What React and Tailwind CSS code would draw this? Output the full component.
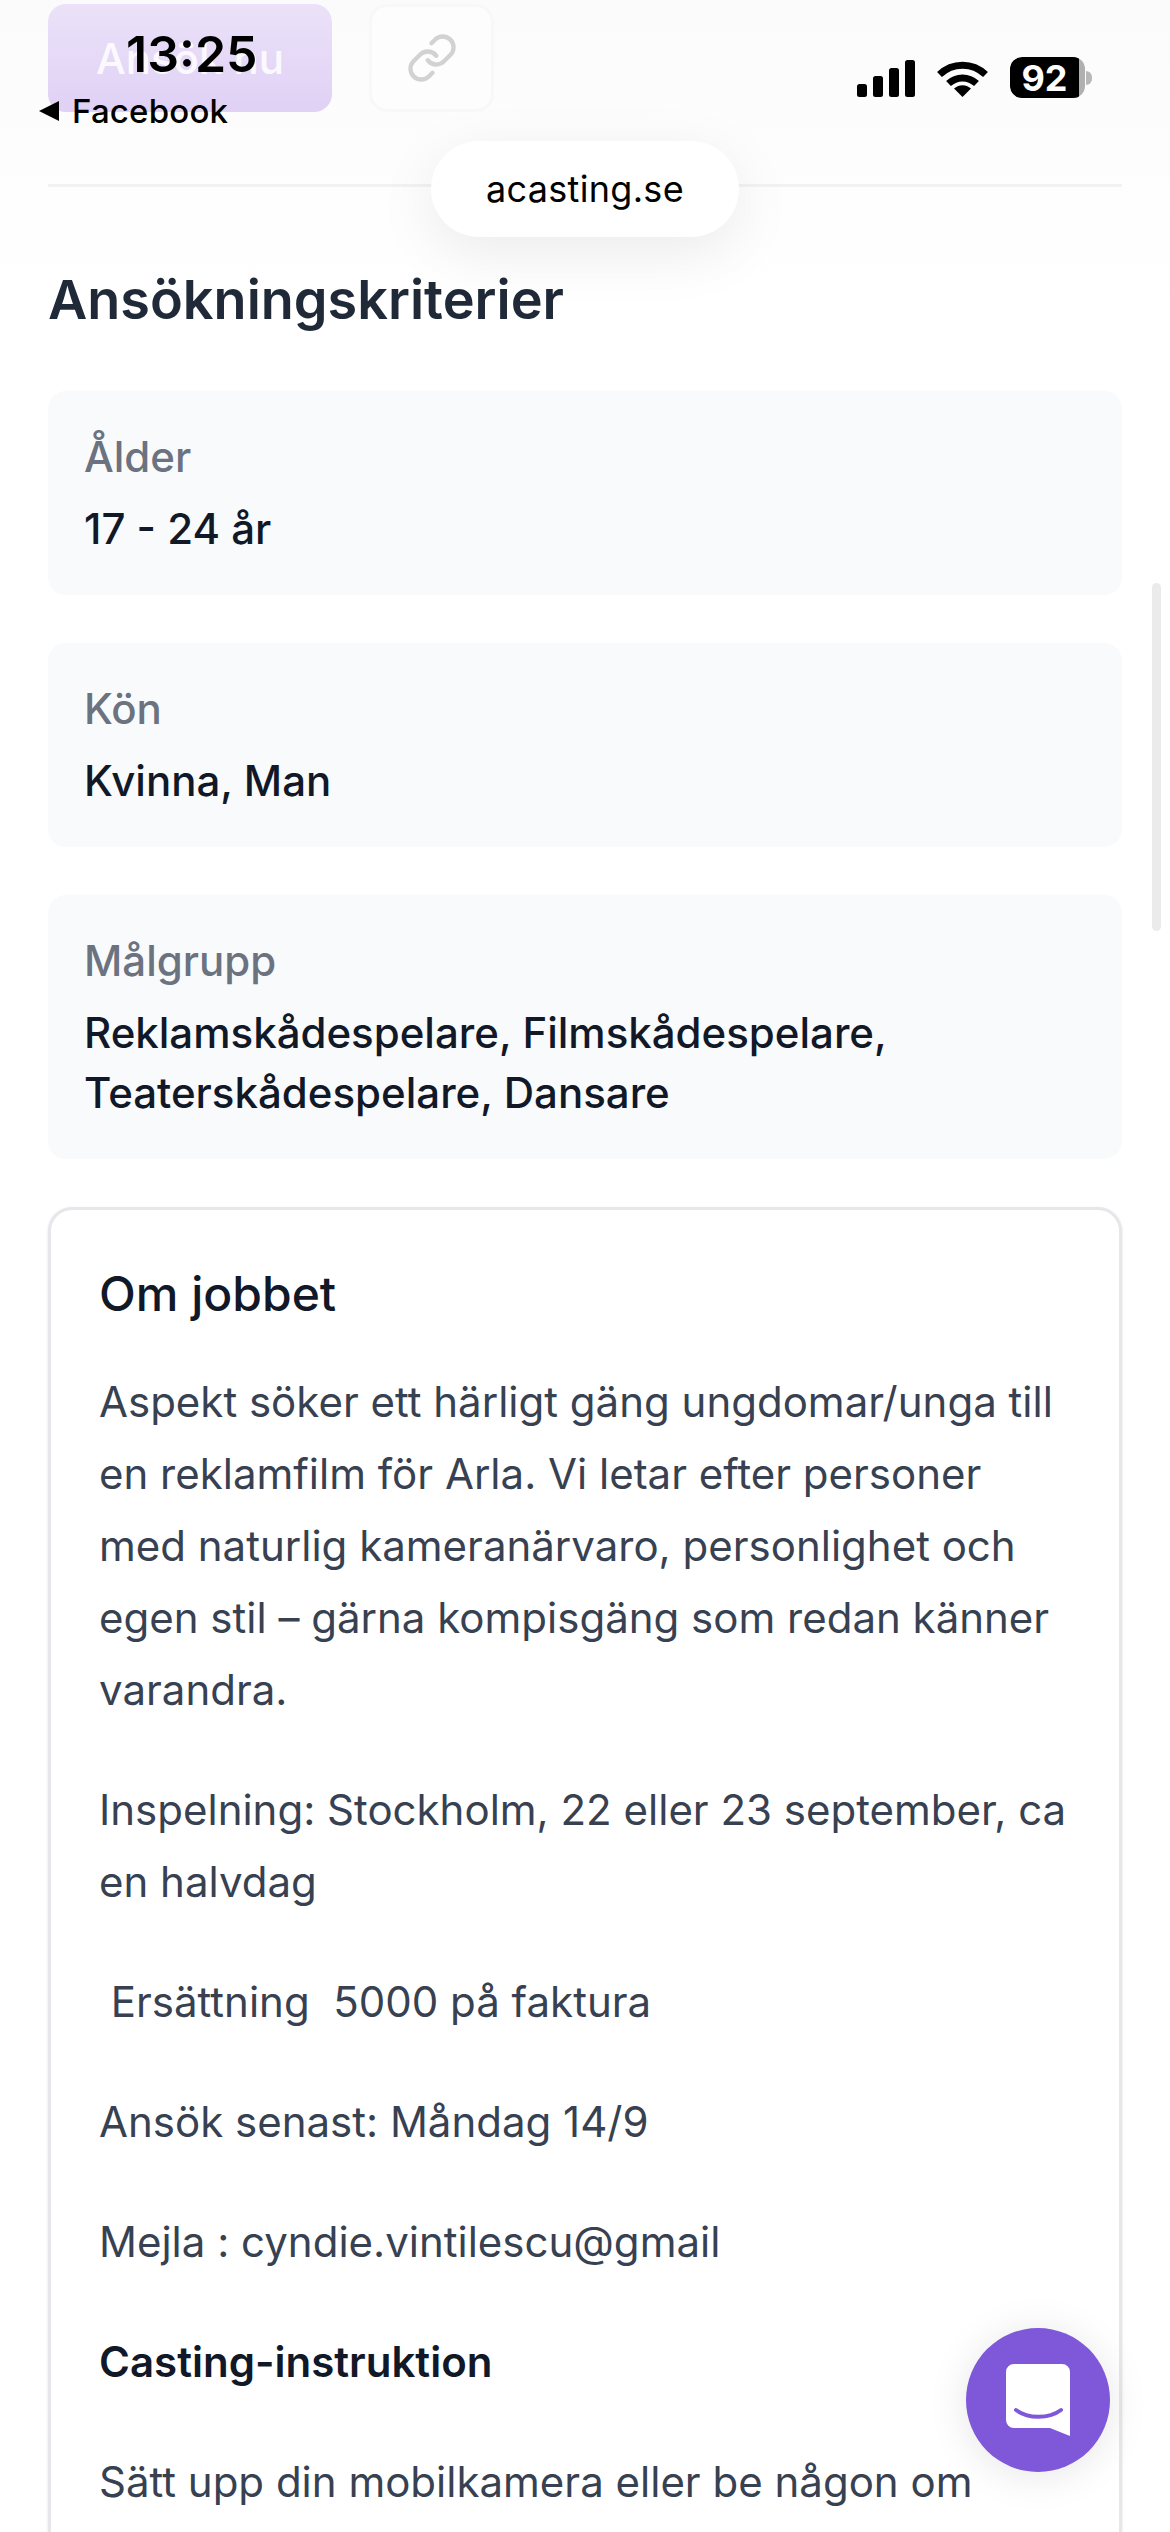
import React from 'react';
import { Link } from 'lucide-react';

const criteria = [
  { label: 'Ålder', lines: ['17 - 24 år'] },
  { label: 'Kön', lines: ['Kvinna, Man'] },
  { label: 'Målgrupp', lines: ['Reklamskådespelare, Filmskådespelare,', 'Teaterskådespelare, Dansare'] },
];

function StatusBar() {
  return (
    <div className="absolute inset-x-0 top-0 h-[130px]">
      <div className="absolute left-[126px] top-[22px] text-[50px] leading-[64px] font-semibold text-black">13:25</div>
      <div className="absolute left-[38px] top-[90px] flex items-center gap-[12px] text-black">
        <svg width="22" height="22" viewBox="0 0 22 22"><path d="M21 1v20L1 11z" fill="#000" /></svg>
        <span className="text-[33px] leading-[42px] font-medium tracking-[0.2px]">Facebook</span>
      </div>
      <div className="absolute left-[857px] top-[57px] flex items-center gap-[22px]">
        <svg width="58" height="38" viewBox="0 0 58 38">
          <rect x="0" y="25" width="10" height="13" rx="2.5" />
          <rect x="16" y="17" width="10" height="21" rx="2.5" />
          <rect x="32" y="9" width="10" height="29" rx="2.5" />
          <rect x="48" y="1" width="10" height="37" rx="2.5" />
        </svg>
        <svg width="51" height="38" viewBox="0 0 51 38" fill="none" stroke="#000" strokeWidth="7">
          <path d="M2.5 15.5C15.5 3 35.5 3 48.500 15.500" />
          <path d="M11.500 24.500C19.500 17 31.500 17 39.500 24.500" />
          <path d="M25.500 38L17 29.500C22 25 29 25 34 29.500z" fill="#000" stroke="none" />
        </svg>
        <div className="flex items-center">
          <div className="relative w-[75px] h-[41px] rounded-[12px] bg-[#b0b0b0] overflow-hidden">
            <div className="absolute inset-y-0 left-0 w-[69px] bg-black rounded-l-[12px] flex items-center justify-center text-white text-[36px] font-bold leading-none">
              92
            </div>
          </div>
          <div className="ml-[1px] w-[6px] h-[14px] rounded-r-full bg-[#b8b8b8]" />
        </div>
      </div>
    </div>
  );
}

export default function App() {
  return (
    <div className="relative h-[2532px] overflow-hidden bg-white bg-gradient-to-b from-[#fbfbfb] to-white bg-[length:100%_300px] bg-no-repeat font-['Inter',sans-serif]">
      <div className="px-[48px] pt-[4px]">
        {/* Top actions */}
        <div className="h-[183px] border-b-[3px] border-[#f2f2f2] flex items-start gap-[37px]">
          <div className="w-[284px] h-[108px] rounded-[18px] bg-gradient-to-b from-[#ebe2f9] to-[#e0d1f5] flex items-center justify-center text-white/85 text-[42px] font-medium">
            Ansök nu
          </div>
          <div className="w-[125px] h-[108px] rounded-[18px] border-[3px] border-[#f8f8f8] bg-[#fdfdfd] flex items-center justify-center">
            <Link size={52} strokeWidth={2} color="#d2d2d2" />
          </div>
        </div>

        <h2 className="mt-[78px] text-[54px] leading-[70px] font-semibold text-[#1f2937]">Ansökningskriterier</h2>

        <div className="mt-[56px] flex flex-col gap-[48px]">
          {criteria.map((c) => (
            <div key={c.label} className="rounded-[18px] bg-[#f9fafb] px-[36px] py-[36px]">
              <div className="text-[42px] leading-[60px] font-medium text-[#6b7280]">{c.label}</div>
              <div className="mt-[12px] text-[42px] leading-[60px] font-medium text-[#111827]">
                {c.lines.map((l) => (
                  <div key={l}>{l}</div>
                ))}
              </div>
            </div>
          ))}
        </div>

        {/* Om jobbet */}
        <div className="mt-[48px] rounded-[24px] border-[3px] border-[#e5e7eb] bg-white shadow-sm px-[48px] pt-[48px] pb-[48px]">
          <h3 className="text-[48px] leading-[72px] font-medium text-[#111827]">Om jobbet</h3>
          <div className="mt-[36px] flex flex-col gap-[48px] text-[42px] leading-[72px] text-[#374151]">
            <p>
              Aspekt söker ett härligt gäng ungdomar/unga till en reklamfilm för Arla. Vi letar efter personer med naturlig
              kameranärvaro, personlighet och egen stil – gärna kompisgäng som redan känner varandra.
            </p>
            <p>Inspelning: Stockholm, 22 eller 23 september, ca en halvdag</p>
            <p>&nbsp;Ersättning &nbsp;5000 på faktura</p>
            <p>Ansök senast: Måndag 14/9</p>
            <p>Mejla : cyndie.vintilescu@gmail</p>
            <p className="font-semibold text-[#111827]">Casting-instruktion</p>
            <p>Sätt upp din mobilkamera eller be någon om</p>
          </div>
        </div>
      </div>

      <StatusBar />

      {/* URL pill */}
      <div className="absolute left-[431px] top-[141px] w-[308px] h-[96px] rounded-full bg-white shadow-[0_16px_60px_rgba(0,0,0,0.08)] flex items-center justify-center text-[36px] tracking-[0.3px] text-black">
        acasting.se
      </div>

      {/* Scrollbar */}
      <div className="absolute left-[1152px] top-[583px] w-[9px] h-[348px] rounded-full bg-[#ebebeb]" />

      {/* Chat launcher */}
      <div className="absolute left-[966px] top-[2328px] w-[144px] h-[144px] rounded-full bg-[#7f57d9] shadow-[0_4px_40px_rgba(0,0,0,0.1)] flex items-center justify-center">
        <svg width="64" height="72" viewBox="0 0 64 72">
          <path d="M8 0h48a8 8 0 0 1 8 8v64l-20-8H8a8 8 0 0 1-8-8V8a8 8 0 0 1 8-8z" fill="#fff" />
          <path d="M10 46c12 9 33 9 45 0" fill="none" stroke="#7f57d9" strokeWidth="4" strokeLinecap="round" />
        </svg>
      </div>
    </div>
  );
}
